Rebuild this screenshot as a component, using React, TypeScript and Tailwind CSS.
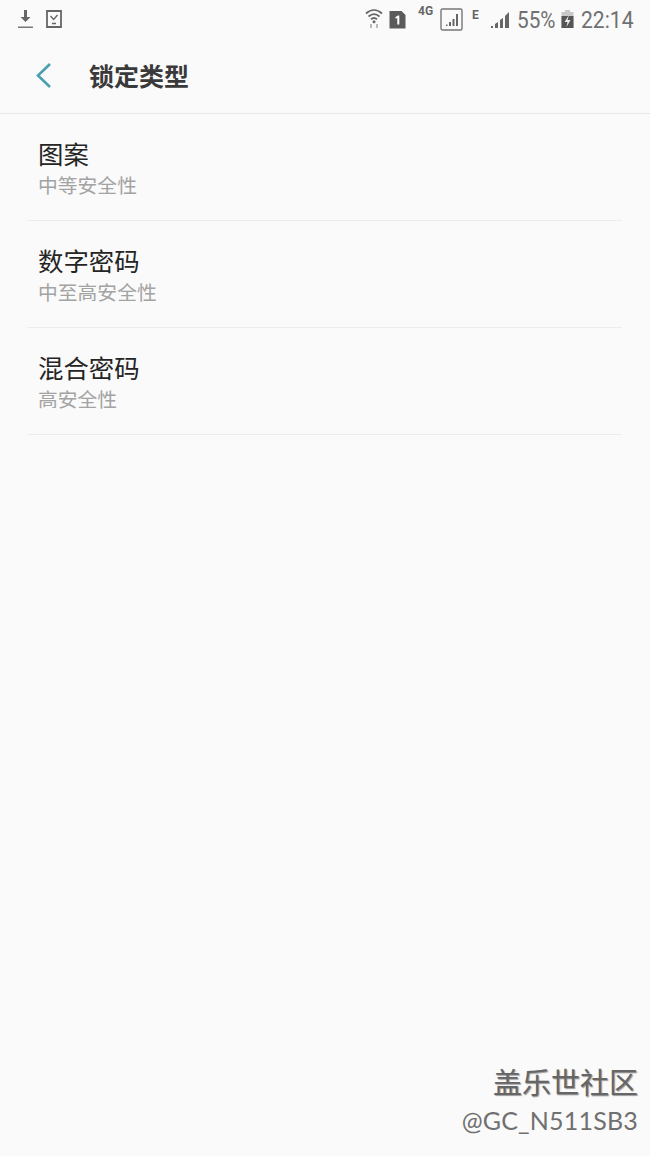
import React from "react";

const rows = [
  { title: "图案", sub: "中等安全性" },
  { title: "数字密码", sub: "中至高安全性" },
  { title: "混合密码", sub: "高安全性" },
];

const StatusBar = () => {
  return (
    <div className="h-[38px] flex items-center pl-[17px] pr-[17px] text-[#666666]">
      {/* download */}
      <svg width="17" height="20" viewBox="0 0 17 20" className="mr-[12px]">
        <path d="M7 1h3v7h3.500L8.500 13 3.500 8H7z" fill="#666666" />
        <rect x="1" y="17.500" width="15" height="1.500" fill="#777777" />
      </svg>
      {/* task */}
      <svg width="16" height="18" viewBox="0 0 16 18">
        <path d="M1 1h14v16H1z" fill="none" stroke="#666666" stroke-width="1.800" />
        <path d="M4.500 6l3.200 3.500 3.800-4.500M6 13.500h4" fill="none" stroke="#666666" stroke-width="1.400" />
      </svg>
      <div className="flex-1" />
      {/* wifi */}
      <svg width="18" height="22" viewBox="0 0 18 22" className="mr-[6px]">
        <path d="M1 5.500c5-4.500 11-4.500 16 0M3.500 8.500c3.500-3 7.500-3 11 0M6 11.300c2-1.700 4-1.700 6 0" fill="none" stroke="#666666" stroke-width="1.800" />
        <circle cx="9" cy="13.800" r="1.500" fill="#666666" />
        <path d="M6 16v4M12 16v4" stroke="#bbbbbb" stroke-width="2" />
      </svg>
      {/* sim */}
      <svg width="17" height="19" viewBox="0 0 17 19" className="mr-[12px]">
        <path d="M0.500 1h12l4 4v13.500H0.500z" fill="#5a5a5a" />
        <path d="M6.500 7l2.500-1.500h1.300v9H8.300V8l-1.800.8z" fill="#ffffff" />
      </svg>
      <div className="w-[17px] h-[22px] text-[12px] leading-[12px] font-bold font-['Roboto',sans-serif] mr-[5px] -mt-[6px] whitespace-nowrap">
        4G
      </div>
      {/* boxed signal */}
      <svg width="23" height="23" viewBox="0 0 23 23" className="mr-[9px]">
        <rect x="1" y="1" width="21" height="21" rx="1.500" fill="none" stroke="#777777" stroke-width="1.400" />
        <path d="M6 18h1.500v-1.500H6zM9 18h2v-4H9zM12.500 18h2v-7h-2zM16 18h2V6h-2z" fill="#666666" />
      </svg>
      <div className="w-[18px] text-[12px] leading-[12px] font-bold font-['Roboto',sans-serif] -mt-[9px]">
        E
      </div>
      {/* signal */}
      <svg width="20" height="19" viewBox="0 0 20 19" className="mr-[7px]">
        <path d="M1 18h2v-2H1zM5 18h3v-6l-3 2zM10 18h3V8l-3 2zM15 18h4V2l-4 4z" fill="#666666" />
      </svg>
      <span className="w-[38px] text-[23px] leading-none font-['Roboto',sans-serif] whitespace-nowrap origin-left scale-x-[0.9] mr-[6px] mt-[2px] text-[#707070]">55%</span>
      {/* battery */}
      <svg width="13" height="20" viewBox="0 0 13 20" className="mr-[7px]">
        <path d="M4 1h5v2h3.500v16H0.500V3H4z" fill="#c8c8c8" />
        <path d="M0.500 7h12v12H0.500z" fill="#555555" />
        <path d="M8 6L3.500 13h3l-1 5 4-7H6.500z" fill="#eeeeee" />
      </svg>
      <span className="w-[52px] text-[24px] leading-none font-['Roboto',sans-serif] whitespace-nowrap origin-left scale-x-[0.88] mt-[2px] text-[#707070]">22:14</span>
    </div>
  );
};

const App = () => {
  return (
    <div className="w-[650px] h-[1156px] flex flex-col bg-[#fafafa] font-['Noto_Sans_CJK_SC','Noto_Sans',sans-serif]">
      <StatusBar />

      {/* header */}
      <div className="h-[76px] flex items-center pl-[35px] border-b border-[#e8e8e8]">
        <svg width="18" height="28" viewBox="0 0 18 28" className="mr-[36px]">
          <path d="M15 2L3 13.500 15 25" fill="none" stroke="#4a9fb0" stroke-width="2.600" />
        </svg>
        <h1 className="text-[25px] leading-none font-bold text-[#3a3a3a]">锁定类型</h1>
      </div>

      {/* list */}
      <div className="px-[28px]">
        {rows.map((row) => (
          <div key={row.title} className="h-[107px] pl-[10px] pt-[19px] border-b border-[#ececec]">
            <div className="text-[25.400px] leading-[40px] text-[#252525]">{row.title}</div>
            <div className="text-[19.800px] leading-[24px] text-[#a3a3a3]">{row.sub}</div>
          </div>
        ))}
      </div>

      {/* watermark */}
      <div className="mt-auto pr-[12px] pb-[19px] flex flex-col items-end">
        <div className="text-[29px] leading-[38px] text-[#666666] [text-shadow:1px_1px_1px_#999999] mb-[3px]">盖乐世社区</div>
        <div className="text-[25px] leading-[34px] text-[#707070] font-['Lato',sans-serif] tracking-[0.2px]">@GC_N511SB3</div>
      </div>
    </div>
  );
};

export default App;
